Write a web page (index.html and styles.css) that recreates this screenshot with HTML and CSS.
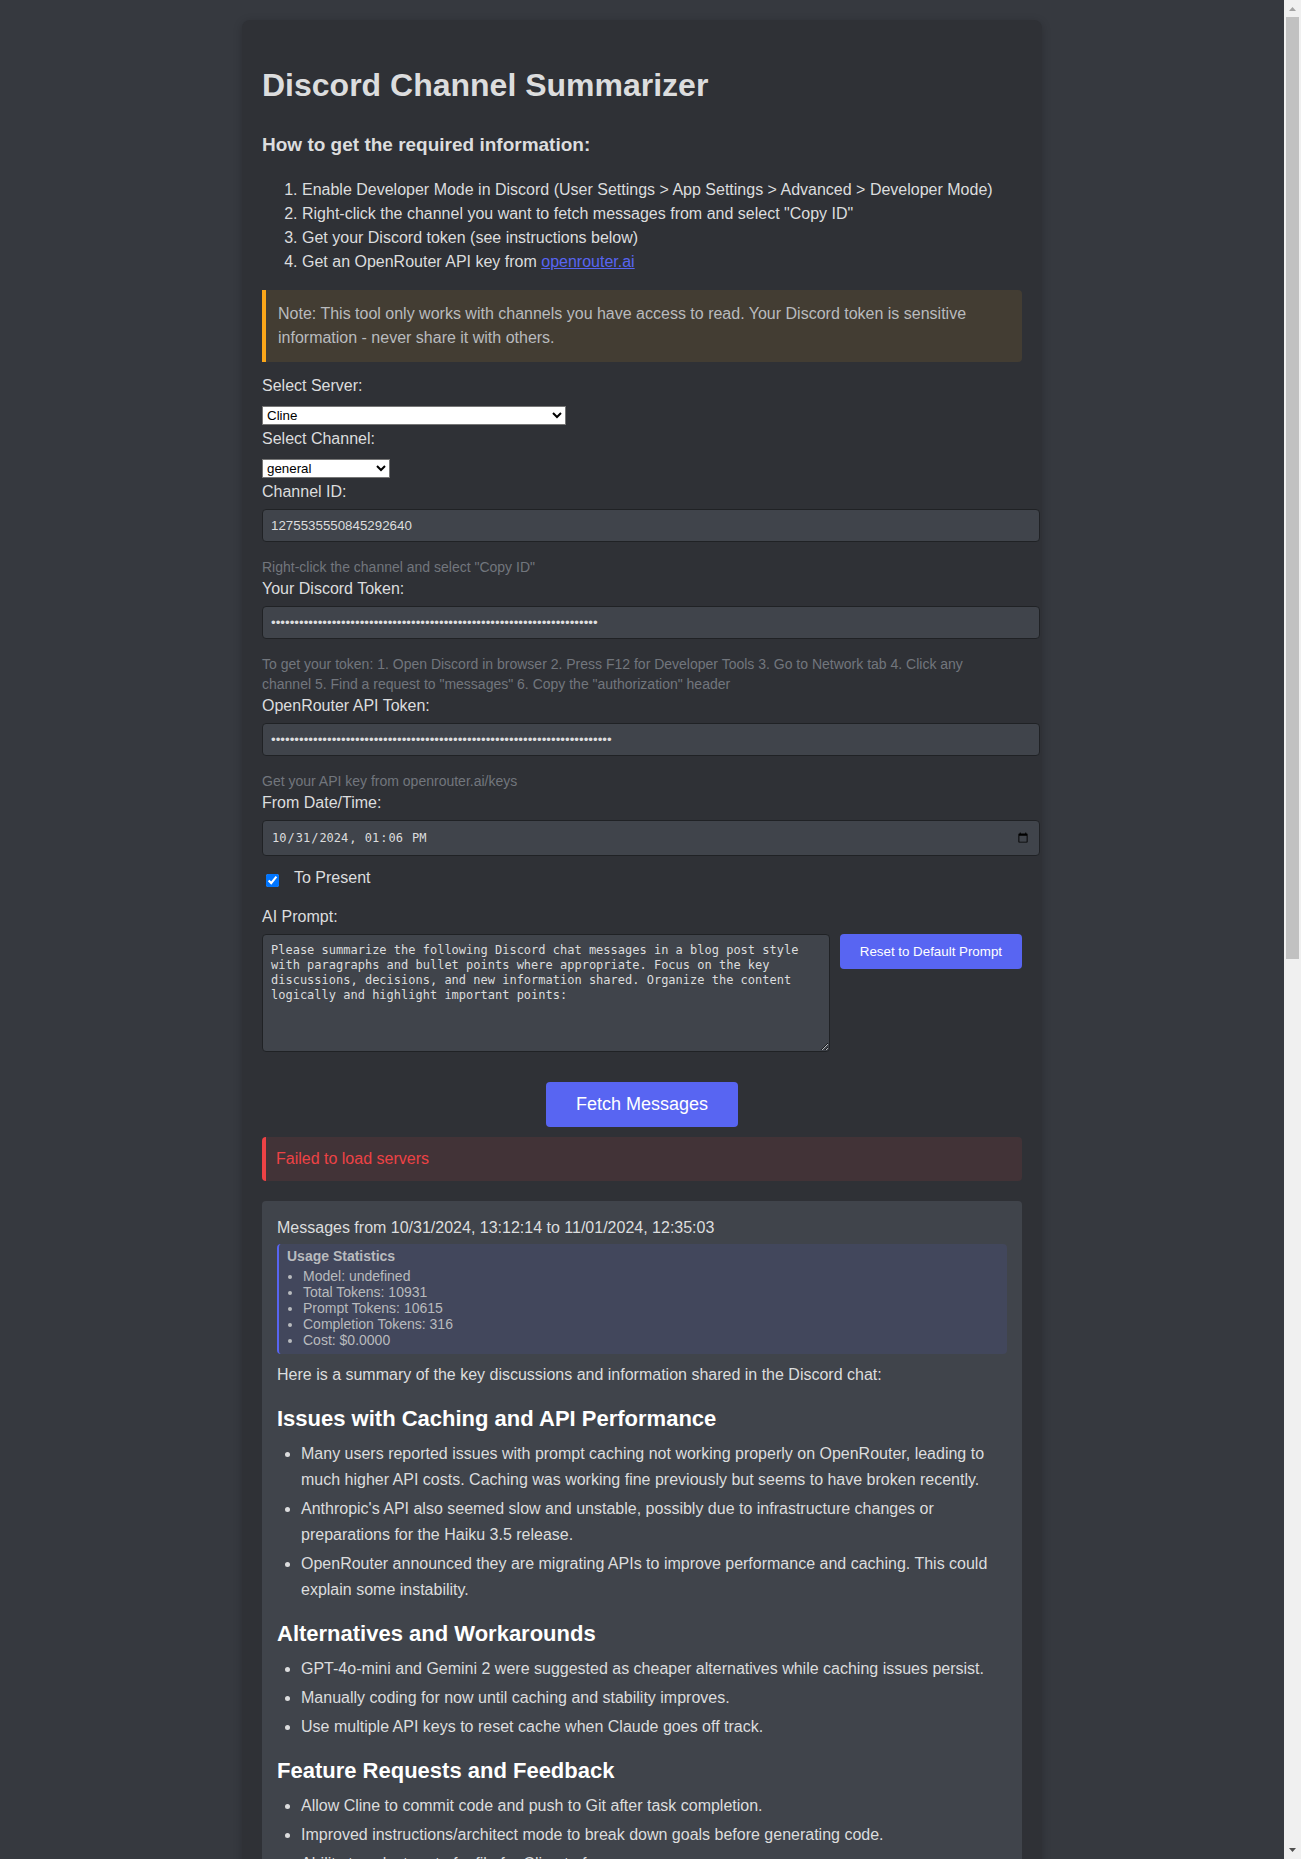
FILE: index.html
```html
<!DOCTYPE html>
<html lang="en">
<head>
<meta charset="utf-8">
<title>Discord Channel Summarizer</title>
<link rel="stylesheet" href="styles.css">
</head>
<body>
<div class="page">
  <div class="content">
    <main class="card">
      <h1 class="title">Discord Channel Summarizer</h1>
      <h3 class="subtitle">How to get the required information:</h3>
      <ol class="steps">
        <li>Enable Developer Mode in Discord (User Settings &gt; App Settings &gt; Advanced &gt; Developer Mode)</li>
        <li>Right-click the channel you want to fetch messages from and select "Copy ID"</li>
        <li>Get your Discord token (see instructions below)</li>
        <li>Get an OpenRouter API key from <a class="link" href="#">openrouter.ai</a></li>
      </ol>
      <div class="note">Note: This tool only works with channels you have access to read. Your Discord token is sensitive information - never share it with others.</div>

      <form class="form">
        <label class="label" for="server">Select Server:</label>
        <select class="select select-server" id="server"><option>Cline</option></select>
        <label class="label" for="channel">Select Channel:</label>
        <select class="select select-channel" id="channel"><option>general</option></select>

        <label class="label" for="channel-id">Channel ID:</label>
        <input class="input" type="text" id="channel-id" value="1275535550845292640">
        <div class="help">Right-click the channel and select "Copy ID"</div>

        <label class="label" for="token">Your Discord Token:</label>
        <input class="input" type="password" id="token" value="0000000000000000000000000000000000000000000000000000000000000000000000">
        <div class="help">To get your token: 1. Open Discord in browser 2. Press F12 for Developer Tools 3. Go to Network tab 4. Click any channel 5. Find a request to "messages" 6. Copy the "authorization" header</div>

        <label class="label" for="api-token">OpenRouter API Token:</label>
        <input class="input" type="password" id="api-token" value="0000000000000000000000000000000000000000000000000000000000000000000000000">
        <div class="help">Get your API key from openrouter.ai/keys</div>

        <label class="label" for="from">From Date/Time:</label>
        <input class="input input-date" type="datetime-local" id="from" value="2024-10-31T13:06">

        <div class="present">
          <input class="check" type="checkbox" id="present" checked>
          <label for="present">To Present</label>
        </div>

        <label class="label" for="prompt">AI Prompt:</label>
        <div class="prompt-row">
          <textarea class="prompt" id="prompt">Please summarize the following Discord chat messages in a blog post style with paragraphs and bullet points where appropriate. Focus on the key discussions, decisions, and new information shared. Organize the content logically and highlight important points:</textarea>
          <button class="button" type="button">Reset to Default Prompt</button>
        </div>
        <button class="button button-main" type="button">Fetch Messages</button>
      </form>

      <div class="error">Failed to load servers</div>

      <section class="results">
        <div>Messages from 10/31/2024, 13:12:14 to 11/01/2024, 12:35:03</div>
        <div class="usage">
          <strong>Usage Statistics</strong>
          <ul class="usage-list">
            <li>Model: undefined</li>
            <li>Total Tokens: 10931</li>
            <li>Prompt Tokens: 10615</li>
            <li>Completion Tokens: 316</li>
            <li>Cost: $0.0000</li>
          </ul>
        </div>
        <div class="summary">
          <p class="intro">Here is a summary of the key discussions and information shared in the Discord chat:</p>
          <h2 class="topic">Issues with Caching and API Performance</h2>
          <ul class="points">
            <li>Many users reported issues with prompt caching not working properly on OpenRouter, leading to much higher API costs. Caching was working fine previously but seems to have broken recently.</li>
            <li>Anthropic's API also seemed slow and unstable, possibly due to infrastructure changes or preparations for the Haiku 3.5 release.</li>
            <li>OpenRouter announced they are migrating APIs to improve performance and caching. This could explain some instability.</li>
          </ul>
          <h2 class="topic">Alternatives and Workarounds</h2>
          <ul class="points">
            <li>GPT-4o-mini and Gemini 2 were suggested as cheaper alternatives while caching issues persist.</li>
            <li>Manually coding for now until caching and stability improves.</li>
            <li>Use multiple API keys to reset cache when Claude goes off track.</li>
          </ul>
          <h2 class="topic">Feature Requests and Feedback</h2>
          <ul class="points">
            <li>Allow Cline to commit code and push to Git after task completion.</li>
            <li>Improved instructions/architect mode to break down goals before generating code.</li>
            <li>Ability to select part of a file for Cline to focus on.</li>
          </ul>
        </div>
      </section>
    </main>
  </div>
  <div class="scrollbar" aria-hidden="true">
    <svg width="17" height="17" viewBox="0 0 17 17"><path d="M5 11h7L8.500 7z" fill="#a3a3a3"/></svg>
    <div class="track"><div class="thumb"></div></div>
    <svg width="17" height="17" viewBox="0 0 17 17"><path d="M5 6h7L8.500 10z" fill="#505050"/></svg>
  </div>
</div>
</body>
</html>
```
FILE: styles.css
```css
body {
  margin: 0;
  background: #36393f;
  color: #dcddde;
  font: 16px/24px "Liberation Sans", Arial, sans-serif;
}

.page {
  display: flex;
  height: 100vh;
  overflow: hidden;
}

.content {
  flex: 1;
  overflow: hidden;
  padding: 20px;
}

.card {
  max-width: 760px;
  margin: 0 auto;
  padding: 20px;
  background: #2f3136;
  border-radius: 8px;
  box-shadow: 0 2px 10px rgba(0, 0, 0, 0.2);
}

.title {
  margin: 21px 0 22px;
  font-size: 32px;
  line-height: 48px;
}

.subtitle {
  margin: 0 0 19px;
  font-size: 19px;
  line-height: 28px;
}

.steps {
  margin: 0 0 16px;
  padding-left: 40px;
}

.link {
  color: #5865f2;
}

.note {
  margin-bottom: 12px;
  padding: 12px;
  border-left: 4px solid #faa61a;
  border-radius: 0 4px 4px 0;
  background: rgba(250, 166, 26, 0.1);
  color: #b9bbbe;
}

.label {
  display: block;
  margin-bottom: 5px;
}

.select {
  display: block;
  height: 19px;
  margin: 8px 0 2px;
  padding: 0;
  border: 1px solid #767676;
  border-radius: 0;
  background-color: #fff;
  color: #000;
  font-family: inherit;
}

.select-server {
  width: 304px;
}

.select-channel {
  width: 128px;
}

.input {
  display: block;
  width: 100%;
  margin-bottom: 15px;
  padding: 8px;
  border: 1px solid #202225;
  border-radius: 4px;
  background: #40444b;
  color: #dcddde;
  font-family: inherit;
}

.input-date {
  height: 18px;
  margin-bottom: 10px;
  font-family: "DejaVu Sans Mono", monospace;
  font-size: 12px;
}

.help {
  padding-right: 20px;
  color: #72767d;
  font-size: 14px;
  line-height: 20px;
}

.present {
  display: flex;
  margin-bottom: 15px;
}

.check {
  width: 13px;
  height: 13px;
  margin: 8px 15px 0 4px;
}

.prompt-row {
  display: flex;
  align-items: flex-start;
  gap: 10px;
}

.prompt {
  flex: 1;
  height: 100px;
  padding: 8px;
  border: 1px solid #202225;
  border-radius: 4px;
  background: #40444b;
  color: #dcddde;
  font: 12px/15px "DejaVu Sans Mono", monospace;
  resize: vertical;
}

.button {
  padding: 10px 20px;
  border: none;
  border-radius: 4px;
  background: #5865f2;
  color: #fff;
  font-family: inherit;
}

.button-main {
  display: block;
  margin: 30px auto 10px;
  padding: 12px 30px;
  font-size: 18px;
}

.error {
  margin-bottom: 20px;
  padding: 10px;
  border-left: 4px solid #ed4245;
  border-radius: 4px;
  background: rgba(237, 66, 69, 0.1);
  color: #ed4245;
}

.results {
  padding: 15px;
  border-radius: 4px;
  background: #40444b;
}

.usage {
  margin: 4px 0 8px;
  padding: 4px 8px;
  border-left: 2px solid #5865f2;
  border-radius: 4px;
  background: rgba(88, 101, 242, 0.1);
  color: #b9bbbe;
  font-size: 14px;
  line-height: 16px;
}

.usage-list {
  margin: 4px 0 2px;
  padding-left: 16px;
}

.summary {
  line-height: 26px;
}

.intro {
  margin: 0;
}

.topic {
  margin: 17px 0 8px;
  color: #fff;
  font-size: 22px;
  line-height: 28px;
}

.points {
  margin: 0;
  padding-left: 24px;
}

.points li + li {
  margin-top: 3px;
}

.scrollbar {
  display: flex;
  flex-direction: column;
  width: 17px;
  background: #f0f0f0;
}

.track {
  flex: 1;
}

.thumb {
  height: 51.6%;
  margin: 0 2px;
  background: #c1c1c1;
}
```
